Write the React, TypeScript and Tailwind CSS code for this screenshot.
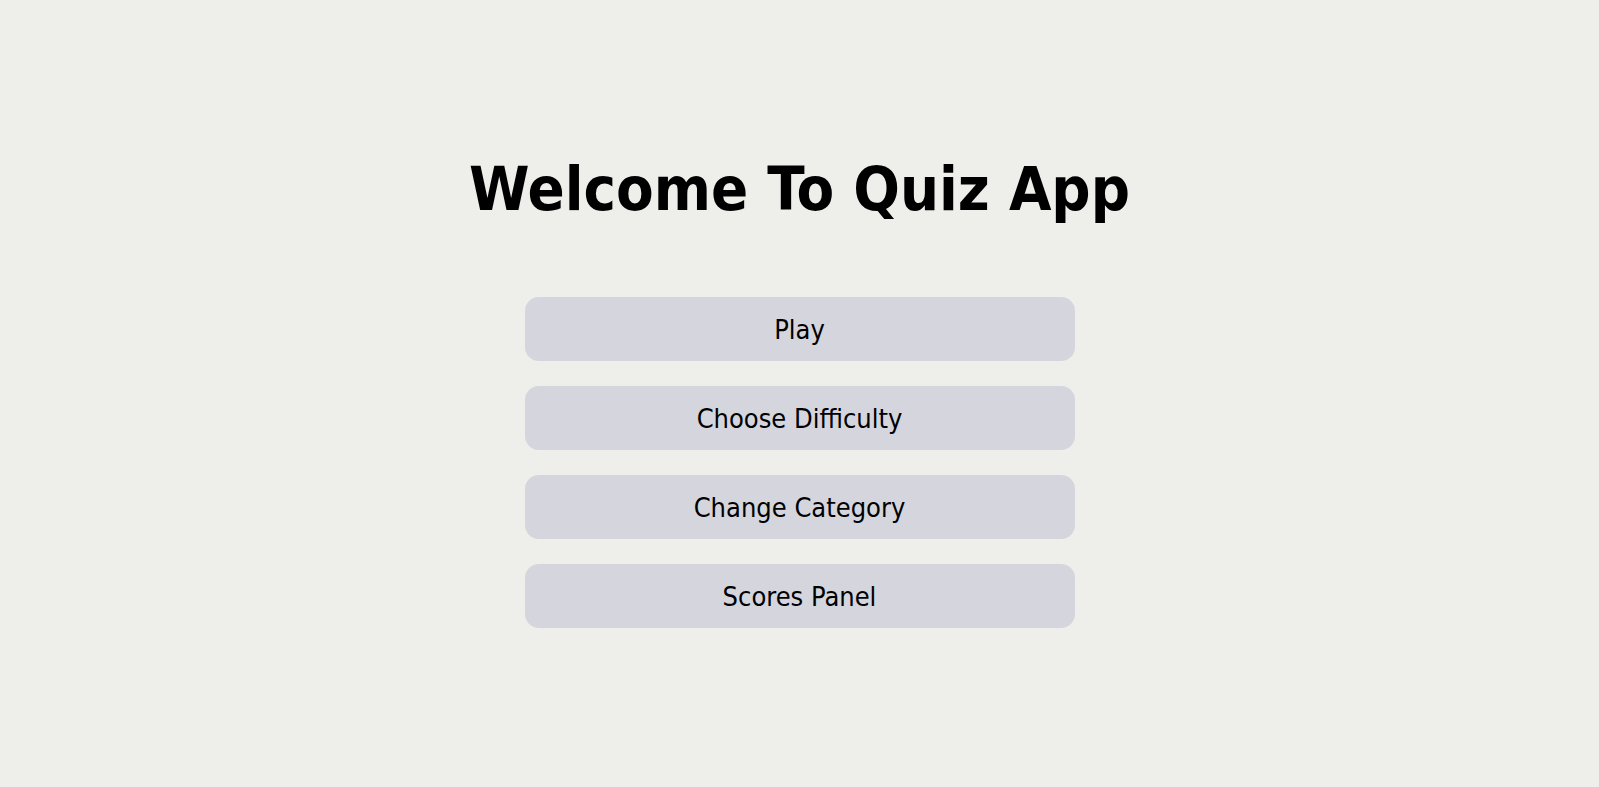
import React from 'react';

const options = ['Play', 'Choose Difficulty', 'Change Category', 'Scores Panel'];

const App: React.FC = () => {
  return (
    <div
      className="min-h-screen w-full bg-[#eeeeea] flex flex-col items-center pt-[151px] text-black"
      style={{ fontFamily: '"DejaVu Sans Condensed", "DejaVu Sans", sans-serif' }}
    >
      <h1 className="text-[61px] leading-[76px] font-bold">Welcome To Quiz App</h1>

      <div className="mt-[70px] flex flex-col gap-[25px]">
        {options.map((label) => (
          <button
            key={label}
            className="w-[550px] h-[64px] pt-[3px] rounded-[14px] bg-[#d5d5de] text-[27px] flex items-center justify-center"
          >
            {label}
          </button>
        ))}
      </div>
    </div>
  );
};

export default App;
